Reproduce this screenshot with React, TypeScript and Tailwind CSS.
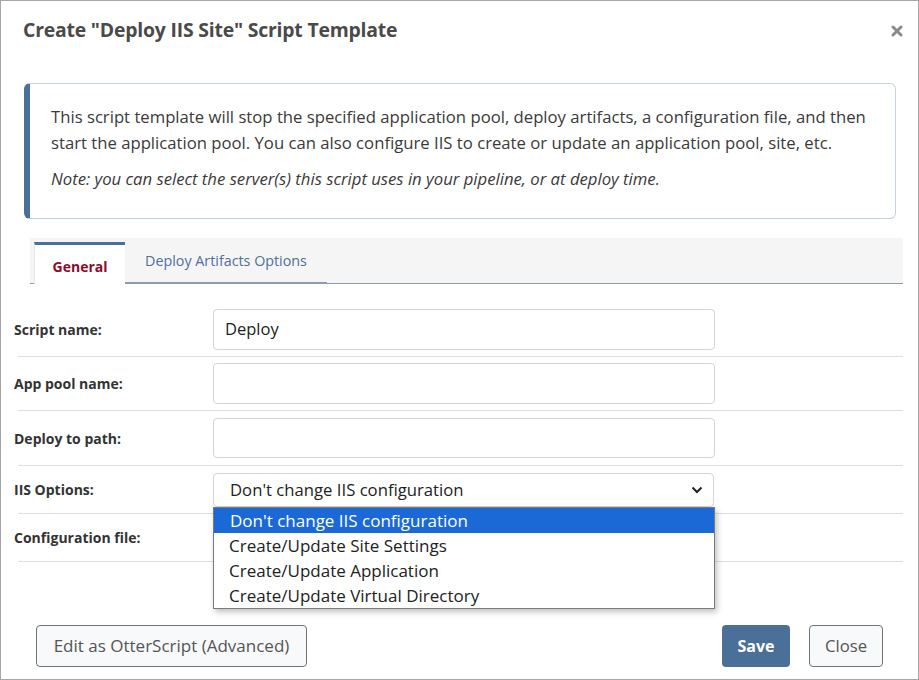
import React from "react";

const font = { fontFamily: '"Open Sans", "Noto Sans", Arial, sans-serif' };

function Row({ label, h, children, pt }: { label: string; h: string; children?: React.ReactNode; pt?: string }) {
  return (
    <div className={`flex items-center ${h} ${pt ?? ""}`}>
      <div className="w-[212px] pl-[13px] text-[14px] font-bold text-[#333]">{label}</div>
      {children}
    </div>
  );
}

function Sep() {
  return <div className="h-px bg-[#dedede] ml-[17px] mr-[15px]" />;
}

export default function App() {
  return (
    <div
      className="relative w-[919px] h-[680px] border border-[#a6a6a6] bg-white overflow-hidden text-[#333]"
      style={font}
    >
      <div className="flex items-center justify-between h-[58px] pl-[22px] pr-[14px]">
        <h1 className="text-[19.4px] font-bold text-[#4a4a4a] tracking-[-0.2px]">
          Create "Deploy IIS Site" Script Template
        </h1>
        <svg width="12" height="12" viewBox="0 0 12 12" className="mt-[1px] mr-[1px]">
          <path d="M2 2 L10 10 M10 2 L2 10" stroke="#8a8a8a" strokeWidth="3" strokeLinecap="round" />
        </svg>
      </div>
      <div className="ml-[23px] mr-[22px] mt-[24px] h-[136px] border border-[#c3d1e0] border-l-[6px] border-l-[#4a6f99] rounded-[6px] pl-[21px] pr-[8px] pt-[20px] text-[16.7px] text-[#3a3a3a] leading-[26px]">
        <p>
          <span className="block whitespace-nowrap">
            This script template will stop the specified application pool, deploy artifacts, a configuration file, and then
          </span>
          <span className="block whitespace-nowrap">
            start the application pool. You can also configure IIS to create or update an application pool, site, etc.
          </span>
        </p>
        <p className="italic mt-[10px] whitespace-nowrap">
          Note: you can select the server(s) this script uses in your pipeline, or at deploy time.
        </p>
      </div>
      <div className="ml-[29px] mr-[15px] mt-[19px] h-[46px] bg-[#f5f5f5] border-b border-[#8c9bb0] flex items-end">
        <div className="ml-[4px] w-[91px] h-[42px] bg-white border-t-[3px] border-[#4a6f99] border-l border-l-[#e6e6e6] flex items-center justify-center text-[14px] font-bold text-[#8f0a2c] mb-[-1px] pt-[4px]">
          General
        </div>
        <div className="w-[202px] h-[42px] flex items-center justify-center text-[14.3px] text-[#4f709a] border-b-2 border-[#8c9bb0] mb-[-1px] pb-[2px]">
          Deploy Artifacts Options
        </div>
      </div>
      <div>
        <Row label="Script name:" h="h-[72px]" pt="pt-[24px] pb-[5px]">
          <div className="w-[502px] h-[41px] border border-[#d4d4d4] rounded-[4px] flex items-center pl-[11px] text-[16.5px] text-[#222]">
            Deploy
          </div>
        </Row>
        <Sep />
        <Row label="App pool name:" h="h-[53px]">
          <div className="w-[502px] h-[41px] border border-[#d4d4d4] rounded-[4px]" />
        </Row>
        <Sep />
        <Row label="Deploy to path:" h="h-[54px]">
          <div className="w-[502px] h-[40px] border border-[#d4d4d4] rounded-[4px]" />
        </Row>
        <Sep />
        <Row label="IIS Options:" h="h-[47px]">
          <div className="w-[501px] h-[34px] border border-[#d4d4d4] rounded-[4px] flex items-center justify-between pl-[16px] pr-[10px] text-[16.7px] text-[#222]">
            <span>Don't change IIS configuration</span>
            <svg width="12" height="8" viewBox="0 0 12 8">
              <path d="M1.5 1.5 L6 6 L10.5 1.5" stroke="#222" strokeWidth="2" fill="none" />
            </svg>
          </div>
        </Row>
        <Sep />
        <Row label="Configuration file:" h="h-[47px]" />
        <Sep />
      </div>
      <div className="absolute left-[212px] top-[506px] w-[502px] border border-[#7a7a7a] bg-white shadow-[2px_3px_6px_rgba(0,0,0,0.25)] text-[17px] text-[#222]">
        <div className="h-[25px] bg-[#1b69d6] text-white pl-[16px] flex items-center">Don't change IIS configuration</div>
        <div className="h-[25px] pl-[15px] flex items-center">Create/Update Site Settings</div>
        <div className="h-[25px] pl-[15px] flex items-center">Create/Update Application</div>
        <div className="h-[25px] pl-[15px] flex items-center">Create/Update Virtual Directory</div>
      </div>
      <div className="absolute left-[35px] right-[35px] top-[624px] flex items-center">
        <div className="w-[271px] h-[42px] border border-[#6c757d] rounded-[4px] bg-[#f8f9fa] flex items-center justify-center text-[17px] text-[#555]">
          Edit as OtterScript (Advanced)
        </div>
        <div className="flex-1" />
        <div className="w-[68px] h-[42px] rounded-[4px] bg-[#4a6f99] flex items-center justify-center text-[16px] font-bold text-white">
          Save
        </div>
        <div className="ml-[19px] w-[74px] h-[42px] border border-[#6c757d] rounded-[4px] bg-[#f8f9fa] flex items-center justify-center text-[16.7px] text-[#555]">
          Close
        </div>
      </div>
    </div>
  );
}
